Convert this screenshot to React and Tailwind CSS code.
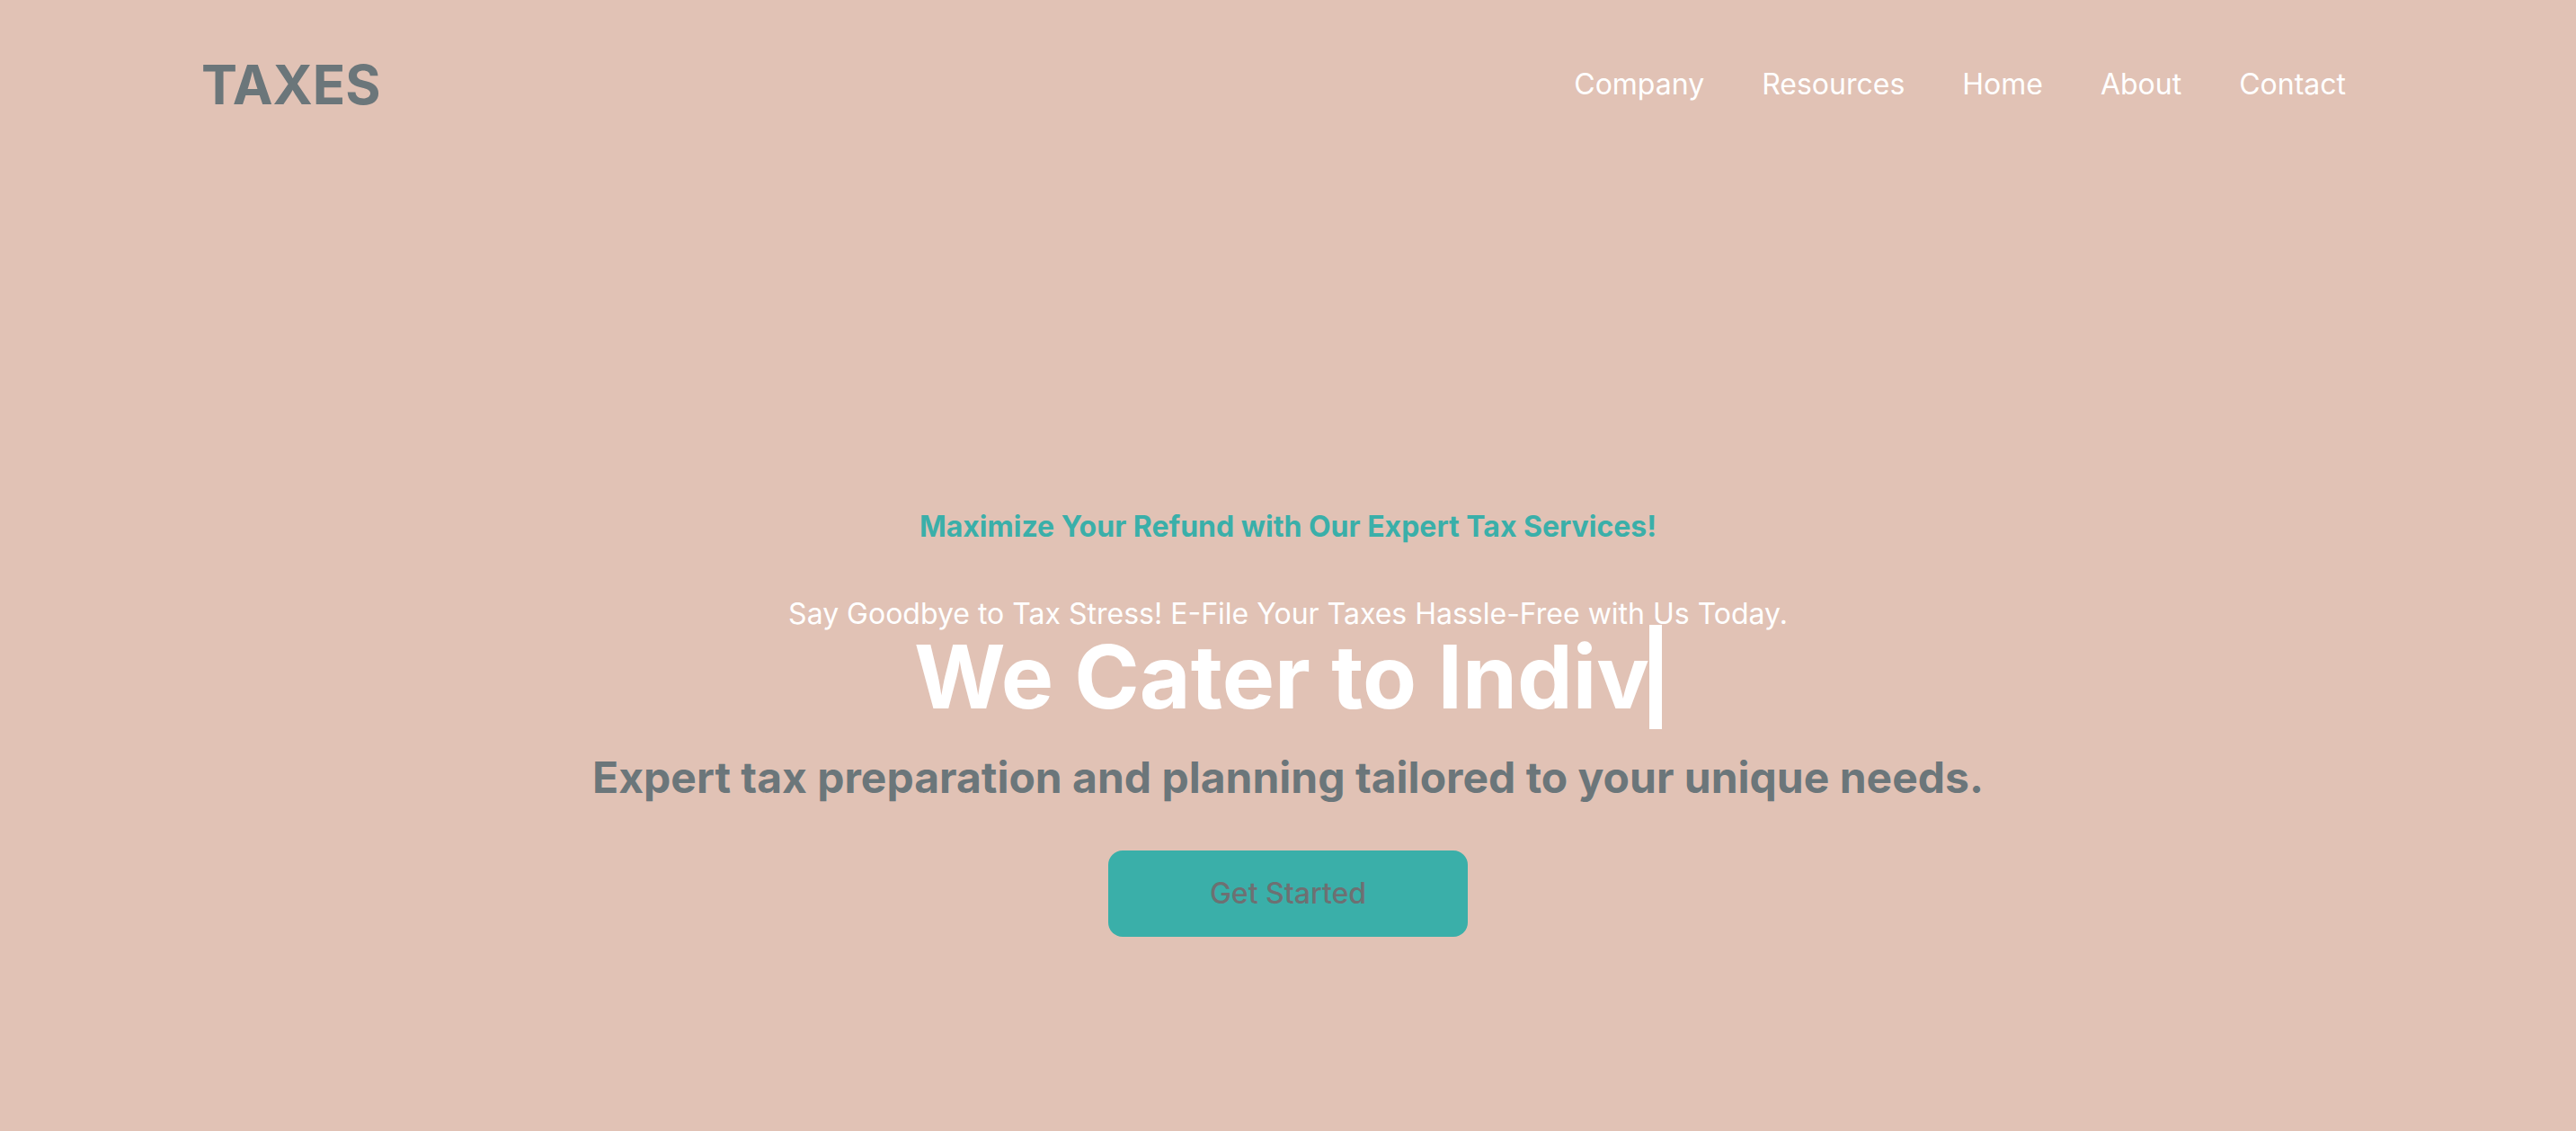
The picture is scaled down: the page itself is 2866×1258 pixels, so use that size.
import React from "react";

const links = ["Company", "Resources", "Home", "About", "Contact"];

const App = () => {
  return (
    <div className="min-h-screen bg-[#e1c2b5] font-['Inter',sans-serif]">
      {/* Header */}
      <header className="h-[188px] flex items-center justify-between pl-[224px] pr-[256px]">
        <h1 className="text-[60px] leading-none font-bold text-[#6b767a]">
          TAXES
        </h1>
        <nav className="flex items-center gap-16">
          {links.map((link) => (
            <a key={link} href="#" className="text-[32px] leading-none text-white">
              {link}
            </a>
          ))}
        </nav>
      </header>

      {/* Hero */}
      <main className="flex flex-col items-center text-center pt-[380px]">
        <p className="text-[32px] leading-[36px] font-bold text-[#3aafa9]">
          Maximize Your Refund with Our Expert Tax Services!
        </p>
        <p className="mt-[63px] text-[32px] leading-[32px] text-white">
          Say Goodbye to Tax Stress! E-File Your Taxes Hassle-Free with Us Today.
        </p>
        <h2 className="mt-[-4px] flex justify-center">
          <span className="inline-block text-[98px] leading-[116px] font-bold text-white border-r-[14px] border-white">
            We Cater to Indiv
          </span>
        </h2>
        <p className="mt-[30px] text-[48px] leading-[48px] font-bold text-[#6b767a]">
          Expert tax preparation and planning tailored to your unique needs.
        </p>
        <button className="mt-[57px] w-[400px] h-[96px] rounded-2xl bg-[#3aafa9] text-[32px] font-medium text-[#6e7072]">
          Get Started
        </button>
      </main>
    </div>
  );
};

export default App;
